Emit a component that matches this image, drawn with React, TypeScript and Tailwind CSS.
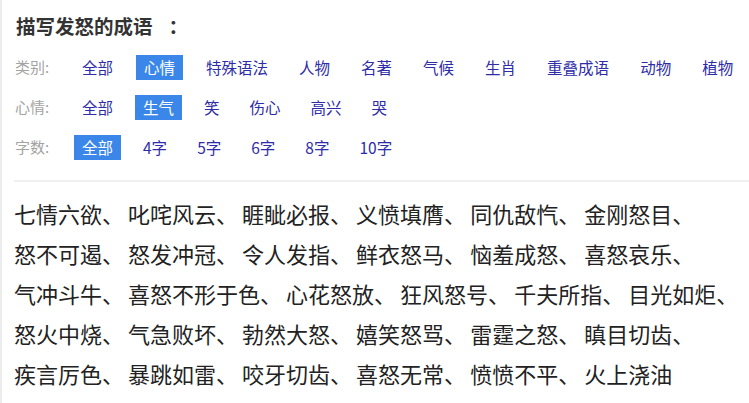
const categories = ['全部', '心情', '特殊语法', '人物', '名著', '气候', '生肖', '重叠成语', '动物', '植物'];
const moods = ['全部', '生气', '笑', '伤心', '高兴', '哭'];
const counts = ['全部', '4字', '5字', '6字', '8字', '10字'];

const idioms = [
  '七情六欲', '叱咤风云', '睚眦必报', '义愤填膺', '同仇敌忾', '金刚怒目',
  '怒不可遏', '怒发冲冠', '令人发指', '鲜衣怒马', '恼羞成怒', '喜怒哀乐',
  '气冲斗牛', '喜怒不形于色', '心花怒放', '狂风怒号', '千夫所指', '目光如炬',
  '怒火中烧', '气急败坏', '勃然大怒', '嬉笑怒骂', '雷霆之怒', '瞋目切齿',
  '疾言厉色', '暴跳如雷', '咬牙切齿', '喜怒无常', '愤愤不平', '火上浇油',
];

function FilterRow({
  label,
  items,
  active,
  wide = false,
}: {
  label: string;
  items: string[];
  active: string;
  wide?: boolean;
}) {
  return (
    <div className="flex h-[40px] items-center">
      <span className="w-[59px] shrink-0 text-[15px] text-[#a3a3a3]">{label}</span>
      <div className={wide ? 'flex items-center gap-[15px]' : 'flex items-center gap-[14px]'}>
        {items.map((item) => (
          <span
            key={item}
            className={
              item === active
                ? 'h-[25px] bg-[#3b87e9] px-2 text-[15.5px] leading-[25px] text-white'
                : 'h-[25px] px-2 text-[15.5px] leading-[25px] text-[#2e2ca8]'
            }
          >
            {item}
          </span>
        ))}
      </div>
    </div>
  );
}

export default function App() {
  return (
    <div
      className="h-[403px] w-[749px] overflow-hidden border-l-2 border-[#ececec] bg-white"
      style={{ fontFamily: '"Noto Sans CJK SC", "Noto Sans", sans-serif' }}
    >
      <div className="pl-[14px] pt-[14px] text-[19.5px] font-bold leading-[24px] text-[#333]">
        描写发怒的成语<span className="ml-[16px]">：</span>
      </div>

      <div className="mt-[9px] pl-[13px]">
        <FilterRow label="类别:" items={categories} active="心情" wide />
        <FilterRow label="心情:" items={moods} active="生气" />
        <FilterRow label="字数:" items={counts} active="全部" />
      </div>

      <div className="ml-[12px] mt-[13px] border-t-2 border-[#f0f0f0]" />

      <div className="flex flex-wrap gap-x-[4px] pl-[12px] pt-[11px] text-[22px] leading-[40px] text-[#222]">
        {idioms.map((idiom, i) => (
          <span key={idiom} className="whitespace-nowrap">
            {idiom}
            {i < idioms.length - 1 ? '、' : ''}
          </span>
        ))}
      </div>
    </div>
  );
}
